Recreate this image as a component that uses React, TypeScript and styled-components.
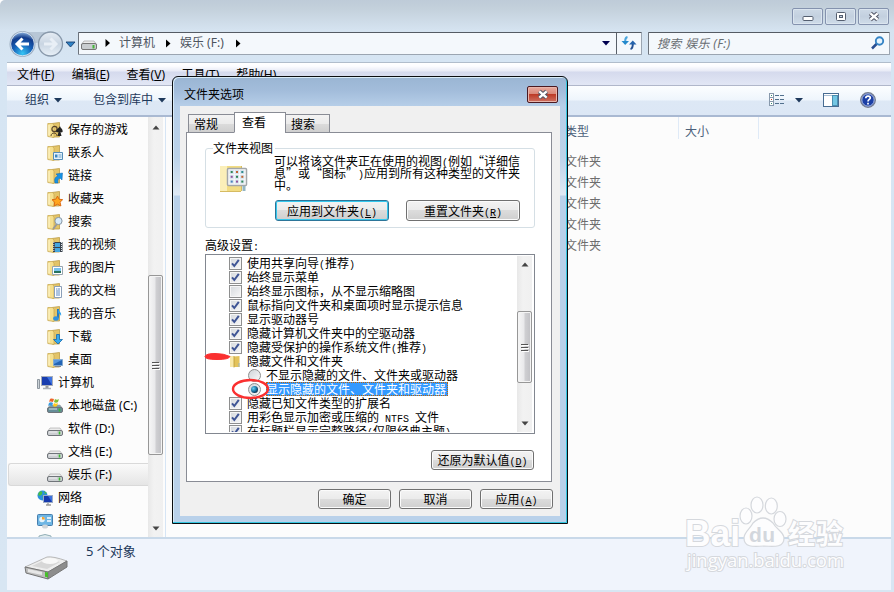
import React from "react";
import styled, { createGlobalStyle, css } from "styled-components";

const Global = createGlobalStyle`
  * { box-sizing: border-box; }
  html, body { margin: 0; overflow: hidden; }
  body { font: 12px/16px "Noto Sans", "Noto Sans CJK SC", sans-serif; color: #000; }
  svg { display: block; flex: none; }
`;

/* ---------- explorer window ---------- */
const Desktop = styled.div`
  position: relative;
  width: 894px;
  height: 592px;
  overflow: hidden;
  white-space: nowrap;
`;
const Explorer = styled.div`
  width: 894px;
  height: 592px;
  display: flex;
  flex-direction: column;
  padding: 0 3px 2px 7px;
  background: linear-gradient(#becbd8 0, #c3d0db 8px, #d5e3f0 30px, #d6e5f3 60px, #d8e6f3 100%);
  border-radius: 5px 0 0 0;
`;
const TitleBar = styled.div`
  height: 32px;
  display: flex;
  justify-content: flex-end;
  gap: 2px;
  padding: 8px 2px 0 0;
`;
const Caption = styled.div`
  width: 31px;
  height: 17px;
  display: flex;
  align-items: center;
  justify-content: center;
  border: 1px solid #8492ae;
  border-radius: 2px;
  background: linear-gradient(#cdd9e6, #c3d0df 50%, #cfdce9);
  box-shadow: inset 0 0 0 1px #dbe5ef;
`;
const NavRow = styled.div`
  height: 30px;
  display: flex;
  align-items: flex-start;
`;
const NavButtons = styled.div`
  width: 71px;
  padding-left: 1px;
  margin-top: -2px;
`;
const Field = styled.div<{ $w: number; $ml?: number }>`
  width: ${(p) => p.$w}px;
  margin-left: ${(p) => p.$ml ?? 0}px;
  height: 23px;
  display: flex;
  align-items: center;
  background: #f4f8fc;
  border: 1px solid #9ba5b1;
  border-top-color: #555b64;
  border-left-color: #6d747d;
  border-radius: 1px;
  color: #4c545e;
`;
const Crumb = styled.span<{ $w: number; $pl?: number }>`
  width: ${(p) => p.$w}px;
  padding-left: ${(p) => p.$pl ?? 0}px;
`;
const Grow = styled.div`
  flex: 1;
`;
const Refresh = styled.div`
  width: 25px;
  height: 21px;
  display: flex;
  align-items: center;
  justify-content: center;
  border-left: 1px solid #596069;
`;
const SearchHint = styled.span`
  flex: 1;
  padding-left: 8px;
  padding-top: 1px;
  font-style: italic;
  letter-spacing: 0.35px;
  color: #686d72;
`;
const MenuBar = styled.div`
  height: 24px;
  display: flex;
  align-items: center;
  padding: 2px 0 0 10px;
  border-top: 1px solid #b1bdcb;
  border-bottom: 1px solid #b0b7ca;
  background: linear-gradient(#fff 0, #fdfdff 3px, #e8ebf6 8px, #d5daed 9px, #e2e7f5 100%);
`;
const MenuItem = styled.span`
  width: 54.8px;
`;
const CommandBar = styled.div`
  height: 32px;
  display: flex;
  align-items: center;
  padding: 1px 15px 1px 18px;
  border-bottom: 2px solid #a9b9d2;
  background: linear-gradient(#fcfeff 0, #eef5fc 14px, #dde8f5 15px, #dce7f5 100%);
  color: #1e395b;
`;
const Command = styled.span<{ $w: number }>`
  width: ${(p) => p.$w}px;
  display: flex;
  align-items: center;
  gap: 5px;
`;
const Body = styled.div`
  height: 420px;
  display: flex;
  background: #fcfcfc;
`;
const Tree = styled.div`
  width: 141px;
  padding-top: 1px;
  overflow: hidden;
`;
const TreeRow = styled.div<{ $root?: boolean; $on?: boolean }>`
  height: 23px;
  display: flex;
  align-items: center;
  gap: 5px;
  padding-left: ${(p) => (p.$root ? 28 : 38)}px;
  margin-left: 1px;
  border: 1px solid transparent;
  border-right: 0;
  ${(p) =>
    p.$on &&
    css`
      border-color: #d9d9d9;
      border-radius: 3px 0 0 3px;
      background: linear-gradient(#fafafa, #e5e5e5);
    `}
`;
const Scroll = styled.div<{ $pad: string }>`
  width: 15px;
  display: flex;
  flex-direction: column;
  align-items: center;
  background: linear-gradient(90deg, #e8e8e8, #f2f2f2 40%, #f0f0f0);
  padding: ${(p) => p.$pad};
`;
const Thumb = styled.div<{ $h: number; $mt: number }>`
  width: 15px;
  height: ${(p) => p.$h}px;
  margin-top: ${(p) => p.$mt}px;
  display: flex;
  align-items: center;
  justify-content: center;
  border: 1px solid #979797;
  border-radius: 2px;
  background: linear-gradient(90deg, #f6f6f6, #e9e9eb 45%, #cfcfd2 55%, #c0c0c4);
  box-shadow: inset 0 0 0 1px #f4f4f4;
`;
const Files = styled.div`
  flex: 1;
  margin-left: 2px;
  border-left: 1px solid #d6e5f5;
  padding-left: 392px;
`;
const Header = styled.div`
  height: 22px;
  display: flex;
  color: #4c607a;
`;
const HeadCell = styled.div<{ $w: number; $p: number }>`
  width: ${(p) => p.$w}px;
  padding: 7px 0 0 ${(p) => p.$p}px;
  border-right: 1px solid #dfeaf7;
`;
const FileRow = styled.div`
  height: 21px;
  padding: 2px 0 0 7px;
  color: #6d6d6d;
`;
const FileList = styled.div`
  padding-top: 13px;
`;
const Details = styled.div`
  height: 53px;
  display: flex;
  padding: 3px 0 0 17px;
  gap: 17px;
  border-top: 2px solid #c9d9e9;
  background: #f0f4fc;
  color: #1e395b;
`;
const Count = styled.span`
  margin-top: 1px;
  font-size: 13px;
`;

/* ---------- dialog ---------- */
const Dialog = styled.div`
  position: absolute;
  left: 172px;
  top: 76px;
  width: 396px;
  height: 448px;
  padding: 0 6px 6px;
  border: 1px solid #0b0d10;
  border-radius: 6px 6px 0 0;
  background: linear-gradient(#9ab5d3 0, #a3bddb 14px, #b6cee8 29px, #bcd3ea 80px, #dfe9f4 118px, #b9d1ea 119px, #b9d1ea 100%);
  box-shadow: inset -1px -1px 0 #35c6e0, inset 1px 1px 0 #d9ecf8;
  font-family: "Noto Sans CJK SC", sans-serif;
  text-spacing-trim: space-all;
`;
const DialogTitle = styled.div`
  height: 29px;
  display: flex;
  justify-content: space-between;
  padding: 9px 3px 0 5px;
`;
const Close = styled.div`
  width: 31px;
  height: 17px;
  display: flex;
  align-items: center;
  justify-content: center;
  border: 1px solid #4b1921;
  border-radius: 2px;
  background: linear-gradient(#e9aa9f 0, #d98879 45%, #bd3b27 50%, #ce7162 100%);
  box-shadow: inset 0 0 0 1px #e9b5ab;
`;
const Client = styled.div`
  width: 380px;
  height: 410px;
  margin-left: 1px;
  padding: 6px 7px 0 6px;
  background: #f0f0f0;
`;
const Tabs = styled.div`
  position: relative;
  height: 21px;
  display: flex;
  align-items: flex-end;
  padding-left: 2px;
  margin-bottom: -1px;
`;
const Tab = styled.div<{ $w: number; $on?: boolean }>`
  width: ${(p) => p.$w}px;
  height: ${(p) => (p.$on ? 21 : 19)}px;
  padding: ${(p) => (p.$on ? "1px 0 0 7px" : "1px 0 0 5px")};
  margin-right: -1px;
  border: 1px solid #898c95;
  border-bottom-color: ${(p) => (p.$on ? "#fff" : "#898c95")};
  background: ${(p) => (p.$on ? "#fff" : "linear-gradient(#f3f3f3, #ebebeb 50%, #dcdcdc 51%, #cfcfcf)")};
`;
const Panel = styled.div`
  width: 366px;
  height: 350px;
  display: flex;
  flex-direction: column;
  padding: 15px 17px 0 18px;
  border: 1px solid #898c95;
  background: #fff;
`;
const Group = styled.div`
  width: 330px;
  height: 80px;
  display: flex;
  border: 1px solid #d5dfe5;
  border-radius: 3px;
  padding-left: 7px;
`;
const Legend = styled.div`
  width: 62px;
  height: 16px;
  margin: -9px -62px 0 0;
  background: #fff;
`;
const GroupIcon = styled.div`
  padding: 16px 0 0 7px;
  width: 61px;
`;
const GroupMain = styled.div`
  padding-top: 6px;
`;
const Blurb = styled.div`
  height: 45px;
`;
const BlurbLine = styled.div`
  height: 12px;
  line-height: 12px;
`;
const Buttons = styled.div<{ $gap: number; $pad?: string }>`
  display: flex;
  justify-content: flex-end;
  gap: ${(p) => p.$gap}px;
  padding: ${(p) => p.$pad ?? "0"};
`;
const Button = styled.div<{ $w: number; $h?: number; $def?: boolean }>`
  width: ${(p) => p.$w}px;
  height: ${(p) => p.$h ?? 20}px;
  display: flex;
  align-items: center;
  justify-content: center;
  border: 1px solid ${(p) => (p.$def ? "#2c7599" : "#707070")};
  border-radius: 3px;
  background: linear-gradient(#f3f3f3, #ebebeb 48%, #dcdcdc 50%, #cfcfcf);
  box-shadow: inset 0 0 0 1px ${(p) => (p.$def ? "#35c8ee" : "#fbfbfb")};
`;
const Half = styled.span`
  font: 10px/1px "Liberation Mono", monospace;
  white-space: pre;
`;
const AdvLabel = styled.div`
  height: 26px;
  padding-top: 9px;
`;
const ListBox = styled.div`
  width: 330px;
  height: 180px;
  display: flex;
  border: 1px solid #828790;
  padding: 1px 2px 1px 23px;
`;
const Options = styled.div`
  width: 288px;
  height: 176px;
  overflow: hidden;
`;
const Option = styled.div<{ $nested?: boolean }>`
  height: 14px;
  line-height: 14px;
  display: flex;
  align-items: center;
  gap: 5px;
  padding-left: ${(p) => (p.$nested ? 19 : 0)}px;
`;
const OptText = styled.span<{ $on?: boolean }>`
  height: 14px;
  display: block;
  ${(p) =>
    p.$on &&
    css`
      line-height: 14px;
      padding-right: 2px;
      background: #3399ff;
      color: #fff;
      outline: 1px dotted #c46500;
      outline-offset: -1px;
    `}
`;
const Check = styled.div`
  width: 13px;
  height: 13px;
  border: 1px solid #8e8f8f;
  background: linear-gradient(135deg, #d5d9dd, #f8f8f8);
  box-shadow: inset 0 0 0 1px #f6f6f6;
`;
const Radio = styled.div`
  width: 13px;
  height: 13px;
  display: flex;
  align-items: center;
  justify-content: center;
  border: 1px solid #8e8f8f;
  border-radius: 50%;
  background: linear-gradient(135deg, #cfd4d9, #fafafa);
`;
const Dot = styled.div`
  width: 7px;
  height: 7px;
  border-radius: 50%;
  background: radial-gradient(circle at 35% 35%, #6bd0f2, #1875a4 45%, #0e2d4b 75%);
`;
const Marks = styled.svg`
  position: absolute;
  left: 200px;
  top: 345px;
`;
const Watermark = styled.svg`
  position: absolute;
  left: 680px;
  top: 490px;
`;

/* Sets Latin runs in a half-width face, so they keep to the 6px grid. */
const Grid = ({ children }: { children: string }) => (
  <>
    {children.split(/([\x20-\x7e]+)/).map((s, i) => (i % 2 ? <Half key={i}>{s}</Half> : s))}
  </>
);
const Key = ({ label, k }: { label: string; k: string }) => (
  <span>
    {label}
    <Half>
      (<u>{k}</u>)
    </Half>
  </span>
);
const Down = ({ c = "#1e395b" }: { c?: string }) => (
  <svg width="8" height="5"><path d="M0 0h8L4 4.5z" fill={c} /></svg>
);
const RightArrow = () => (
  <svg width="5" height="9"><path d="M0 .5v8L4.5 4.5z" fill="#000" /></svg>
);
const Tip = ({ down }: { down?: boolean }) => (
  <svg width="8" height="5"><path d={down ? "M.5 .5h7L4 4.500z" : "M.5 4.500h7L4 .5z"} fill="#444" /></svg>
);
const Grip = () => (
  <svg width="8" height="9"><path d="M0 1.5h7M0 4.5h7M0 7.5h7" stroke="#555" /><path d="M1 2.5h7M1 5.5h7M1 8.5h7" stroke="#fff" /></svg>
);
const CloseX = () => (
  <svg width="14" height="11" viewBox="0 0 14 11">
    <path d="M3.300 2.300 10.700 8.700M10.700 2.300 3.300 8.700" stroke="#535666" strokeWidth="4.400" />
    <path d="M3.300 2.300 10.700 8.700M10.700 2.300 3.300 8.700" stroke="#fff" strokeWidth="2.300" />
  </svg>
);

const overlays: Record<string, React.ReactNode> = {
  game: <><circle cx="7.5" cy="7" r="2.6" fill="none" stroke="#59452b" strokeWidth="1.2" /><path d="M4 14c0-4 6-4 6 0" fill="none" stroke="#59452b" /><path d="M13 4c0 2 3.500 3 2.500 6-1 1-2 0-2 0l1 4h-4l1-4c-2 1-3-.5-2-2 1-1.500 3-2.500 3.500-4z" fill="#242424" /></>,
  contact: <><path d="M6.500 7.500h9v7h-9z" fill="#e5f2fb" stroke="#568db8" /><path d="M8 9.500h2.500v3H8z" fill="#3b87c0" /><path d="M11.500 10h3m-3 2h3" stroke="#6fa3c8" /></>,
  link: <path d="M8 15c-1-4 0-6 3-7L9 6l6.500-1L15 12l-2-2c-2 1-2.500 2-2 5z" fill="#1792e3" stroke="#0d66b7" strokeWidth=".5" />,
  star: <path d="m10.500 5 1.600 3.300 3.600.3-2.600 2.600.8 3.800-3.400-1.800L7.100 15l.6-3.800L5 8.700l3.800-.5z" fill="#ffa51e" stroke="#d9630c" strokeWidth=".9" />,
  search: <><path d="M6 15l4-5" stroke="#999" strokeWidth="2" /><circle cx="11.500" cy="7" r="3.600" fill="#d6eafa" stroke="#8796a4" /></>,
  video: <><path d="M6 5h9.500v10H6z" fill="#39424c" /><path d="M8 6h5v4H8zm0 5h5v4H8z" fill="#45a6df" /><path d="M6.800 5v10M14.500 5v10" stroke="#dde5ea" strokeDasharray="1 1" /></>,
  image: <><path d="M5.500 6.500h10v8h-10z" fill="#fff" stroke="#98a5b0" /><path d="M7 8h7v3H7z" fill="#79c3ee" /><path d="M7 11h7v2H7z" fill="#28745e" /></>,
  doc: <><path d="M7.500 3.500h7v11h-7z" fill="#fff" stroke="#8b9fb8" /><path d="M9 6h1.500M11 6h2M9 8h4M9 10h4M9 12h4" stroke="#5b89c5" /></>,
  music: <><path d="M11 3v9" stroke="#1673c4" strokeWidth="1.800" /><path d="M11 3c1 3 4 3 3 7-.5-2-2-2-3-3z" fill="#2ca0eb" /><ellipse cx="9" cy="12.500" rx="2.800" ry="2.200" fill="#2c91e0" /></>,
  down: <path d="M9.500 5.500h3v5h3L11 15l-4.500-4.500h3z" fill="#37a9ed" stroke="#1469ad" strokeWidth=".8" />,
  desk: <><path d="M6.500 7.500h9v6h-9z" fill="#2364b5" stroke="#83a9ce" /><path d="M7 8h8l-8 4z" fill="#5797df" /><path d="M8 14.500h6" stroke="#888" /></>,
};
const Folder = ({ kind }: { kind: string }) => (
  <svg width="16" height="16" viewBox="0 0 16 16">
    <path d="M5 1.500 12.500 .5v14.500H5z" fill="#e3c468" stroke="#bd9d47" strokeWidth=".8" />
    <path d="M.8 1.500h5l1.200 2v12L.8 14.500z" fill="#f6e08f" stroke="#c9ab55" strokeWidth=".8" />
    <path d="M2 3v10.500" stroke="#fdf4c8" strokeWidth="1.300" />
    {overlays[kind]}
  </svg>
);
const Drive = ({ win }: { win?: boolean }) => (
  <svg width="16" height="16" viewBox="0 0 16 16">
    <path d="M3 7h10l2.500 3.500H.5z" fill={win ? "#799eaa" : "#ececec"} stroke="#a3a3a3" strokeWidth=".6" />
    <rect x=".5" y="9.500" width="15" height="5" rx="1.500" fill={win ? "#668d98" : "#cccfd2"} stroke="#70757a" />
    <path d="M2 11h8" stroke="#fff" opacity=".7" />
    <path d="M12.500 10.500v3" stroke="#3cbb33" strokeWidth="1.600" />
    {win && <><path d="M3 1c2-1 3 0 4 0L6 4C5 4 4 3 2 4z" fill="#ee652a" /><path d="M8 1c1 1 3 1 4 0l-1 3c-1 1-3 1-4 0z" fill="#83bd32" /><path d="M2 5c1-1 3-1 4 0L5 8C4 7 2 7 1 8z" fill="#389ce1" /><path d="M7 5c1 1 3 1 4 0l-1 3c-1 1-3 1-4 0z" fill="#ffc91e" /></>}
  </svg>
);
const Computer = () => (
  <svg width="16" height="16" viewBox="0 0 16 16">
    <path d="M.5 4.500h2v9h-2z" fill="#ccd3d8" stroke="#8d969e" />
    <rect x="4.500" y="1.500" width="11" height="9" fill="#183daf" stroke="#a7adb8" />
    <path d="M10 2h5v8z" fill="#3c72e2" /><path d="M8.500 11h3v2h-3z" fill="#999" /><path d="M6 13.500h8" stroke="#aab0b8" strokeWidth="1.500" />
  </svg>
);
const Network = () => (
  <svg width="16" height="16" viewBox="0 0 16 16">
    <circle cx="5.500" cy="5.500" r="5" fill="#2b91e0" /><path d="M2 2c3-2 4 0 3 2S2 6 1 5zm4 3c3-1 3 2 1 5-1-1-2-3-1-5zM7 1l3 2-2 1z" fill="#49bd45" />
    <rect x="6.500" y="5.500" width="9" height="7" fill="#1639ad" stroke="#9cacc6" /><path d="M11 6h4v6z" fill="#3b71de" /><path d="M11 13v2M9 15h5" stroke="#999" strokeWidth="1.300" />
  </svg>
);
const Control = () => (
  <svg width="16" height="16" viewBox="0 0 16 16">
    <rect x=".5" y="1.500" width="15" height="11" rx="1" fill="#6eb6e4" stroke="#467eae" /><circle cx="5" cy="6.500" r="2.800" fill="#e6f4fb" /><path d="M5 6.500V3.700a2.800 2.800 0 0 1 2.800 2.800z" fill="#f6a22c" />
    <path d="M10 5h4m-4 3h4" stroke="#fff" strokeWidth="1.300" /><ellipse cx="8" cy="13.500" rx="3" ry="2" fill="#cfd5d9" />
  </svg>
);

const tree: [string, React.ReactNode, boolean?][] = [
  ["保存的游戏", <Folder kind="game" />],
  ["联系人", <Folder kind="contact" />],
  ["链接", <Folder kind="link" />],
  ["收藏夹", <Folder kind="star" />],
  ["搜索", <Folder kind="search" />],
  ["我的视频", <Folder kind="video" />],
  ["我的图片", <Folder kind="image" />],
  ["我的文档", <Folder kind="doc" />],
  ["我的音乐", <Folder kind="music" />],
  ["下载", <Folder kind="down" />],
  ["桌面", <Folder kind="desk" />],
  ["计算机", <Computer />, true],
  ["本地磁盘 (C:)", <Drive win />],
  ["软件 (D:)", <Drive />],
  ["文档 (E:)", <Drive />],
  ["娱乐 (F:)", <Drive />],
  ["网络", <Network />, true],
  ["控制面板", <Control />, true],
];

type Opt = { t: string; kind: "on" | "off" | "folder" | "radio" | "selected" };
const options: Opt[] = [
  { t: "使用共享向导(推荐)", kind: "on" },
  { t: "始终显示菜单", kind: "on" },
  { t: "始终显示图标，从不显示缩略图", kind: "off" },
  { t: "鼠标指向文件夹和桌面项时显示提示信息", kind: "on" },
  { t: "显示驱动器号", kind: "on" },
  { t: "隐藏计算机文件夹中的空驱动器", kind: "on" },
  { t: "隐藏受保护的操作系统文件(推荐)", kind: "on" },
  { t: "隐藏文件和文件夹", kind: "folder" },
  { t: "不显示隐藏的文件、文件夹或驱动器", kind: "radio" },
  { t: "显示隐藏的文件、文件夹和驱动器", kind: "selected" },
  { t: "隐藏已知文件类型的扩展名", kind: "on" },
  { t: "用彩色显示加密或压缩的 NTFS 文件", kind: "on" },
  { t: "在标题栏显示完整路径(仅限经典主题)", kind: "on" },
];
const OptIcon = ({ kind }: { kind: Opt["kind"] }) => {
  if (kind === "folder")
    return (
      <svg width="13" height="13" viewBox="0 0 13 13">
        <path d="M1 1h4v11H1z" fill="#f9e9a9" /><path d="M5 1.500 10.500 1v11H5z" fill="#e3c35b" /><path d="M5 1v11.500" stroke="#b99734" strokeWidth=".8" /><path d="M9.500 8h1v4h-1z" fill="#9bb6bb" />
      </svg>
    );
  if (kind === "radio" || kind === "selected") return <Radio>{kind === "selected" && <Dot />}</Radio>;
  return (
    <Check>
      {kind === "on" && (
        <svg width="11" height="11" viewBox="0 0 11 11"><path d="M2 5.300 4.300 8 8.800 1.800" fill="none" stroke="#3f5595" strokeWidth="2" /></svg>
      )}
    </Check>
  );
};

const ViewIcon = () => (
  <svg width="28" height="28" viewBox="0 0 28 28">
    <path d="M0 1h21v26H0z" fill="#f2dc83" /><path d="M0 1h7v26H0z" fill="#fbefb9" /><path d="M0 26.500h21M21.500 1v25" stroke="#d6bb62" />
    <rect x="7.500" y="3.500" width="19" height="17" rx="1" fill="#fafafa" stroke="#a3a7aa" strokeWidth="1.500" />
    {[0, 1, 2].flatMap((r) =>
      [0, 1, 2].map((c) => (
        <g key={`${r}${c}`}>
          <rect x={9.500 + c * 5.300} y={5 + r * 4.800} width="4.300" height="4" fill="#d6e4ee" />
          <rect x={10.700 + c * 5.300} y={6 + r * 4.800} width="2" height="2" fill={["#318559", "#4780ba", "#c3632f", "#8f539c", "#308b8e"][(r * 3 + c * 2) % 5]} />
        </g>
      )),
    )}
    <path d="M24 21v5" stroke="#93b5c2" strokeWidth="3" />
  </svg>
);

export default function App() {
  return (
    <Desktop>
      <Global />
      <Explorer>
        <TitleBar>
          <Caption><svg width="12" height="9"><rect x="1" y="4.500" width="10" height="4" rx="1" fill="#fff" stroke="#555f70" /></svg></Caption>
          <Caption><svg width="12" height="9"><rect x="1.500" y=".5" width="9" height="8" rx="1" fill="#fff" stroke="#555f70" /><rect x="4.500" y="3.500" width="3" height="2" fill="#c4d0df" stroke="#555f70" /></svg></Caption>
          <Caption><CloseX /></Caption>
        </TitleBar>
        <NavRow>
          <NavButtons>
            <svg width="70" height="28" viewBox="0 0 70 28">
              <defs>
                <radialGradient id="back" cx=".5" cy=".9" r=".9"><stop offset="0" stopColor="#36c6f5" /><stop offset=".45" stopColor="#1762b9" /><stop offset=".75" stopColor="#123c8c" /><stop offset="1" stopColor="#8ab0dc" /></radialGradient>
                <linearGradient id="fwd" x2="0" y2="1"><stop offset="0" stopColor="#e6edf4" /><stop offset=".5" stopColor="#c9d5e2" /><stop offset="1" stopColor="#e9f1f8" /></linearGradient>
              </defs>
              <path d="M14 2h28v9q-14 4-28 0z" fill="#b7c6d6" />
              <circle cx="14.500" cy="14" r="13" fill="#9cadc0" /><circle cx="14.500" cy="14" r="11.800" fill="url(#back)" stroke="#e8f1fa" strokeWidth=".8" />
              <circle cx="42.500" cy="14" r="12" fill="url(#fwd)" stroke="#8999ab" strokeWidth="1.300" />
              <path d="M21 14H9.500M14.500 8.500 9 14l5.500 5.500" fill="none" stroke="#fff" strokeWidth="3" />
              <path d="M36 14h11M42.500 8.500 48 14l-5.500 5.500" fill="none" stroke="#e9eff6" strokeWidth="3" />
              <path d="M58 12h9l-4.500 5z" fill="#2f83c6" stroke="#183e70" strokeWidth=".9" />
            </svg>
          </NavButtons>
          <Field $w={564}>
            <svg width="38" height="18" viewBox="0 0 38 18">
              <path d="m5 7 10 0 3 4H2z" fill="#ececec" stroke="#999" strokeWidth=".6" /><rect x="2.500" y="9.500" width="15" height="6" rx="1.500" fill="#c9cdd0" stroke="#777" /><path d="M14.500 11v3.500" stroke="#47b43b" strokeWidth="2" /><path d="M26.500 5v8l4.500-4z" fill="#000" />
            </svg>
            <Crumb $w={49} $pl={2}>计算机</Crumb>
            <RightArrow />
            <Crumb $w={65} $pl={9}>娱乐 (F:)</Crumb>
            <RightArrow />
            <Grow />
            <Crumb $w={14}><Down c="#000050" /></Crumb>
            <Refresh>
              <svg width="16" height="14" viewBox="0 0 16 14">
                <path d="M6.500 1Q4.200 1.500 4.200 5" fill="none" stroke="#4aa5dd" strokeWidth="2" /><path d="M.5 5h7.500L4.200 9z" fill="#2489cc" />
                <path d="M9.500 13q2.300-.5 2.300-5" fill="none" stroke="#234f92" strokeWidth="2" /><path d="M8 8.500h7.500L11.800 4.500z" fill="#2563ac" />
              </svg>
            </Refresh>
          </Field>
          <Field $w={242} $ml={6}>
            <SearchHint>搜索 娱乐 (F:)</SearchHint>
            <svg width="18" height="14" viewBox="0 0 18 14"><path d="m1 12.500 5-5" stroke="#284d91" strokeWidth="2.500" /><circle cx="8.500" cy="5" r="3.700" fill="#e7f4fd" stroke="#3684c5" strokeWidth="1.900" /></svg>
          </Field>
        </NavRow>
        <MenuBar>
          <MenuItem>文件(<u>F</u>)</MenuItem><MenuItem>编辑(<u>E</u>)</MenuItem><MenuItem>查看(<u>V</u>)</MenuItem><MenuItem>工具(<u>T</u>)</MenuItem><MenuItem>帮助(<u>H</u>)</MenuItem>
        </MenuBar>
        <CommandBar>
          <Command $w={68}>组织<Down /></Command>
          <Command $w={80}>包含到库中<Down /></Command>
          <Grow />
          <svg width="54" height="16" viewBox="0 0 54 16">
            <rect x=".5" y="1.500" width="4" height="12" fill="#fff" stroke="#8799ac" /><path d="M0 5.500h5M0 9.500h5" stroke="#8799ac" />
            <path d="M2 3.500h1M2 11.500h1" stroke="#328b70" /><path d="M2 7.500h1" stroke="#c4371e" />
            <path d="M6 3.500h4M11 3.500h4M6 7.500h4M11 7.500h4M6 11.500h4M11 11.500h4" stroke="#51708d" /><path d="M26 6h8l-4 4.500z" fill="#1e395b" />
          </svg>
          <svg width="37" height="16" viewBox="0 0 37 16"><rect x=".500" y="1.500" width="15" height="13" fill="#fff" stroke="#476c92" /><path d="M1 3.500h14" stroke="#a9bfd4" /><rect x="9.500" y="3.500" width="5" height="10" fill="#72c6e3" stroke="#4a8eaf" /></svg>
          <svg width="16" height="16" viewBox="0 0 16 16"><circle cx="8" cy="8" r="7.300" fill="#1b3fa5" stroke="#777e8d" strokeWidth="1.300" /><circle cx="8" cy="8" r="6.200" fill="none" stroke="#d5def4" strokeWidth=".8" /><path d="M5.800 6.200c0-3 4.500-2.700 4.500-.3C10.300 7.400 8 7.400 8 9.500M8 10.800v1.700" fill="none" stroke="#fff" strokeWidth="1.700" /></svg>
        </CommandBar>
        <Body>
          <Tree>
            {tree.map(([t, icon, root], i) => (
              <TreeRow key={t} $root={root} $on={i === 15}>{icon}{t}</TreeRow>
            ))}
            <TreeRow $root>
              <svg width="16" height="23" viewBox="0 0 16 23"><path d="M2 4Q8 1 14 4v15H2z" fill="#e0ebee" stroke="#92afb7" /></svg>
            </TreeRow>
          </Tree>
          <Scroll $pad="8px 0 6px"><Tip /><Thumb $h={180} $mt={145}><Grip /></Thumb><Grow /><Tip down /></Scroll>
          <Files>
            <Header><HeadCell $w={121} $p={7}>类型</HeadCell><HeadCell $w={80} $p={6}>大小</HeadCell></Header>
            <FileList>{[1, 2, 3, 4, 5].map((n) => <FileRow key={n}>文件夹</FileRow>)}</FileList>
          </Files>
        </Body>
        <Details>
          <svg width="45" height="40" viewBox="0 0 45 40">
            <path d="M1 25 23 15q6-1 20 4L24 30z" fill="#ededed" stroke="#aaa" strokeWidth=".8" /><path d="m8 24 15-7 13 3-13 7z" fill="#d7d7d7" /><ellipse cx="26" cy="19" rx="8" ry="3" fill="#f8f8f8" />
            <path d="m1 25 23 5v7L2 31z" fill="#bdbdbd" stroke="#737373" /><path d="m24 30 19-11v6L24 37z" fill="#8d8d8d" stroke="#777" /><path d="m4 27 14 3v3L4 30z" fill="#e7e7e7" /><path d="m21 30 3 .5v5l-3-.7z" fill="#45bf29" />
          </svg>
          <Count>5 个对象</Count>
        </Details>
      </Explorer>

      <Watermark width="170" height="90" viewBox="0 0 170 90">
        <g fill="#fdfdfe" stroke="#d5d8dd" strokeWidth="1.200">
          <ellipse cx="77" cy="15" rx="6" ry="8" /><ellipse cx="91.300" cy="16" rx="6" ry="8" /><ellipse cx="66" cy="26" rx="6" ry="8" /><ellipse cx="100" cy="29" rx="6" ry="7.500" />
          <path d="M73 33q10-10 20 0c3 6 11 9 11 15 0 9-8 9-20 8-12 1-20 1-20-8 0-6 6-9 9-15z" />
          <g fontFamily="Liberation Sans, Noto Sans CJK SC, sans-serif" fontWeight="700" paintOrder="stroke" strokeWidth="2">
            <text x="5" y="56" fontSize="36" textLength="55" lengthAdjust="spacingAndGlyphs">Bai</text>
            <text x="69" y="52" fontSize="21" textLength="26" stroke="none" fill="#d3d7dd">du</text>
            <text x="108" y="54" fontSize="27" textLength="55">经验</text>
            <text x="7" y="77" fontSize="18" fontFamily="Open Sans, sans-serif" fontWeight="400" textLength="157" lengthAdjust="spacingAndGlyphs">jingyan.baidu.com</text>
          </g>
        </g>
      </Watermark>

      <Dialog>
        <DialogTitle><span>文件夹选项</span><Close><CloseX /></Close></DialogTitle>
        <Client>
          <Tabs><Tab $w={47}>常规</Tab><Tab $w={52} $on>查看</Tab><Tab $w={45}>搜索</Tab></Tabs>
          <Panel>
            <Group>
              <Legend>文件夹视图</Legend>
              <GroupIcon><ViewIcon /></GroupIcon>
              <GroupMain>
                <Blurb>
                  <BlurbLine><Grid>可以将该文件夹正在使用的视图(例如“详细信</Grid></BlurbLine>
                  <BlurbLine><Grid>息”或“图标”)应用到所有这种类型的文件夹</Grid></BlurbLine>
                  <BlurbLine>中。</BlurbLine>
                </Blurb>
                <Buttons $gap={17}>
                  <Button $w={114} $h={21} $def><Key label="应用到文件夹" k="L" /></Button>
                  <Button $w={114} $h={21}><Key label="重置文件夹" k="R" /></Button>
                </Buttons>
              </GroupMain>
            </Group>
            <AdvLabel><Grid>高级设置:</Grid></AdvLabel>
            <ListBox>
              <Options>
                {options.map(({ t, kind }) => {
                  const nested = kind === "radio" || kind === "selected";
                  return (
                    <Option key={t} $nested={nested}>
                      <OptIcon kind={kind} />
                      <OptText $on={kind === "selected"}><Grid>{t}</Grid></OptText>
                    </Option>
                  );
                })}
              </Options>
              <Scroll $pad="6px 0 6px"><Tip /><Thumb $h={72} $mt={44}><Grip /></Thumb><Grow /><Tip down /></Scroll>
            </ListBox>
            <Buttons $gap={0} $pad="16px 0 0"><Button $w={103}><Key label="还原为默认值" k="D" /></Button></Buttons>
          </Panel>
          <Buttons $gap={8} $pad="7px 0 0"><Button $w={73}>确定</Button><Button $w={73}>取消</Button><Button $w={73}><Key label="应用" k="A" /></Button></Buttons>
        </Client>
      </Dialog>

      <Marks width="75" height="60" viewBox="0 0 75 60">
        <path d="M5 11.500q1-3 10-3t15 3q-1 3-13 3T5 11.500z" fill="#fa3030" stroke="#fa3030" />
        <ellipse cx="50.500" cy="44" rx="17.500" ry="9" fill="none" stroke="#fa3030" strokeWidth="2.400" />
      </Marks>
    </Desktop>
  );
}
